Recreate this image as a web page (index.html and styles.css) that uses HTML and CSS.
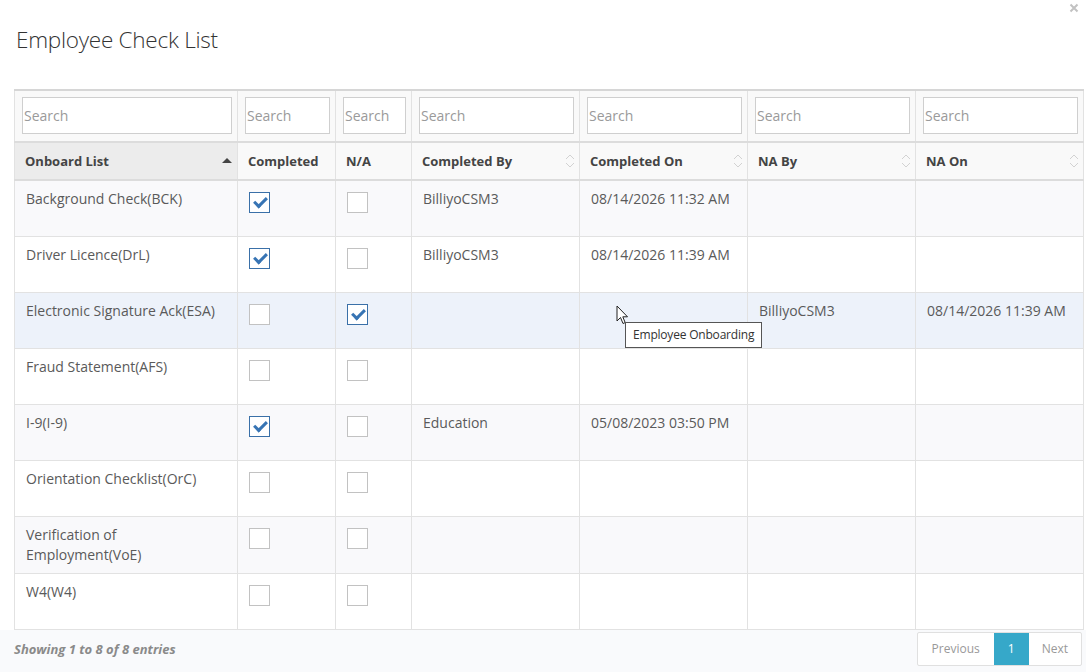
FILE: index.html
```html
<!DOCTYPE html>
<html lang="en">
<head>
    <meta charset="UTF-8">
    <title>Employee Check List</title>
    <link rel="stylesheet" href="styles.css">
</head>
<body>
    <div class="modal">
        <svg class="close" width="10" height="10" viewBox="0 0 10 10">
            <path d="M1.5 1.5 L8.5 8.5 M8.5 1.5 L1.5 8.5" stroke="#c2c2c2" stroke-width="2"/>
        </svg>
        <h1>Employee Check List</h1>

        <div class="table-wrap">
            <table class="grid">
                <colgroup>
                    <col style="width:223px">
                    <col style="width:98px">
                    <col style="width:76px">
                    <col style="width:168px">
                    <col style="width:168px">
                    <col style="width:168px">
                    <col style="width:168px">
                </colgroup>
                <thead>
                    <tr class="filters">
                        <th><input type="text" placeholder="Search"></th>
                        <th><input type="text" placeholder="Search"></th>
                        <th><input type="text" placeholder="Search"></th>
                        <th><input type="text" placeholder="Search"></th>
                        <th><input type="text" placeholder="Search"></th>
                        <th><input type="text" placeholder="Search"></th>
                        <th><input type="text" placeholder="Search"></th>
                    </tr>
                    <tr class="heads">
                        <th class="sorted">Onboard List <span class="sort-up"></span></th>
                        <th>Completed</th>
                        <th>N/A</th>
                        <th class="sortable">Completed By <svg class="sort" width="10" height="16" viewBox="0 0 10 16"><path d="M1 6 L5 2 L9 6 M1 10 L5 14 L9 10" fill="none" stroke="#d2d2d2" stroke-width="1"/></svg></th>
                        <th class="sortable">Completed On <svg class="sort" width="10" height="16" viewBox="0 0 10 16"><path d="M1 6 L5 2 L9 6 M1 10 L5 14 L9 10" fill="none" stroke="#d2d2d2" stroke-width="1"/></svg></th>
                        <th class="sortable">NA By <svg class="sort" width="10" height="16" viewBox="0 0 10 16"><path d="M1 6 L5 2 L9 6 M1 10 L5 14 L9 10" fill="none" stroke="#d2d2d2" stroke-width="1"/></svg></th>
                        <th class="sortable">NA On <svg class="sort" width="10" height="16" viewBox="0 0 10 16"><path d="M1 6 L5 2 L9 6 M1 10 L5 14 L9 10" fill="none" stroke="#d2d2d2" stroke-width="1"/></svg></th>
                    </tr>
                </thead>
                <tbody>
                    <tr class="odd">
                        <td>Background Check(BCK)</td>
                        <td><span class="cb checked"></span></td>
                        <td><span class="cb"></span></td>
                        <td>BilliyoCSM3</td>
                        <td>08/14/2026 11:32 AM</td>
                        <td></td>
                        <td></td>
                    </tr>
                    <tr>
                        <td>Driver Licence(DrL)</td>
                        <td><span class="cb checked"></span></td>
                        <td><span class="cb"></span></td>
                        <td>BilliyoCSM3</td>
                        <td>08/14/2026 11:39 AM</td>
                        <td></td>
                        <td></td>
                    </tr>
                    <tr class="hover">
                        <td>Electronic Signature Ack(ESA)</td>
                        <td><span class="cb"></span></td>
                        <td><span class="cb checked"></span></td>
                        <td></td>
                        <td></td>
                        <td>BilliyoCSM3</td>
                        <td>08/14/2026 11:39 AM</td>
                    </tr>
                    <tr>
                        <td>Fraud Statement(AFS)</td>
                        <td><span class="cb"></span></td>
                        <td><span class="cb"></span></td>
                        <td></td>
                        <td></td>
                        <td></td>
                        <td></td>
                    </tr>
                    <tr class="odd">
                        <td>I-9(I-9)</td>
                        <td><span class="cb checked"></span></td>
                        <td><span class="cb"></span></td>
                        <td>Education</td>
                        <td>05/08/2023 03:50 PM</td>
                        <td></td>
                        <td></td>
                    </tr>
                    <tr>
                        <td>Orientation Checklist(OrC)</td>
                        <td><span class="cb"></span></td>
                        <td><span class="cb"></span></td>
                        <td></td>
                        <td></td>
                        <td></td>
                        <td></td>
                    </tr>
                    <tr class="odd">
                        <td>Verification of Employment(VoE)</td>
                        <td><span class="cb"></span></td>
                        <td><span class="cb"></span></td>
                        <td></td>
                        <td></td>
                        <td></td>
                        <td></td>
                    </tr>
                    <tr>
                        <td>W4(W4)</td>
                        <td><span class="cb"></span></td>
                        <td><span class="cb"></span></td>
                        <td></td>
                        <td></td>
                        <td></td>
                        <td></td>
                    </tr>
                </tbody>
            </table>

            <svg class="cursor" width="13" height="20" viewBox="0 0 13 20">
                <path d="M1 1 L1 16 L4.5 12.5 L7 18.5 L9.2 17.6 L6.8 11.8 L11.5 11.8 Z" fill="#fff" stroke="#222" stroke-width="1" stroke-linejoin="round"/>
            </svg>
            <div class="tooltip">Employee Onboarding</div>
        </div>

        <div class="footer">
            <div class="info">Showing 1 to 8 of 8 entries</div>
            <div class="pager">
                <span class="page">Previous</span>
                <span class="page active">1</span>
                <span class="page next">Next</span>
            </div>
        </div>
    </div>
</body>
</html>
```

FILE: styles.css
```css
* {
    box-sizing: border-box;
}

body {
    margin: 0;
    font-family: "Open Sans", "Liberation Sans", sans-serif;
    background-color: #fff;
    color: #555;
}

.modal {
    position: relative;
    width: 1086px;
}

.close {
    position: absolute;
    top: 3px;
    right: 7px;
}

h1 {
    margin: 0;
    padding: 24px 0 0 16px;
    height: 89px;
    font-size: 22.5px;
    font-weight: 300;
    color: #333;
    letter-spacing: -0.25px;
}

.table-wrap {
    position: relative;
    margin-left: 14px;
    width: 1070px;
}

.grid {
    border-collapse: collapse;
    table-layout: fixed;
    width: 1070px;
    border: 1px solid #d6d6d6;
    border-top: 2px solid #d6d6d6;
    font-size: 14px;
}

.grid th,
.grid td {
    border-left: 1px solid #e2e2e2;
    border-right: 1px solid #e2e2e2;
    text-align: left;
    vertical-align: top;
}

.filters th {
    padding: 6px 5px 7px 7px;
    background-color: #f9f9f9;
    border-bottom: 2px solid #dcdcdc;
}

.filters input {
    display: block;
    width: 100%;
    height: 37px;
    border: 1px solid #cfcfcf;
    padding: 0 1px;
    font-family: "Open Sans", "Liberation Sans", sans-serif;
    font-size: 14px;
    color: #555;
    background: #fff;
}

.filters input::placeholder {
    color: #9a9a9a;
}

.heads th {
    position: relative;
    height: 38px;
    padding: 9px 10px 0 10px;
    font-size: 13px;
    font-weight: 700;
    color: #444;
    background-color: #f9f9f9;
    border-bottom: 2px solid #dcdcdc;
}

.heads th.sorted {
    background-color: #ececec;
}

.sort-up {
    position: absolute;
    right: 5px;
    top: 15px;
    width: 0;
    height: 0;
    border-left: 5px solid transparent;
    border-right: 5px solid transparent;
    border-bottom: 5px solid #444;
}

.sort {
    position: absolute;
    right: 4px;
    top: 10px;
}

.grid tbody tr {
    height: 56px;
}

.grid tbody td {
    padding: 8px 11px;
    line-height: 20px;
    color: #5a5a5a;
    border-bottom: 1px solid #e2e2e2;
    background-color: #fff;
}

.grid tbody tr.odd td {
    background-color: #f9f9fb;
}

.grid tbody tr.hover td {
    background-color: #edf2fa;
}

.cb {
    display: block;
    width: 21px;
    height: 21px;
    margin-top: 3px;
    border: 1px solid #c2c2c2;
    background: #fff;
    position: relative;
}

.cb.checked {
    border-color: #3a70a8;
}

.cb.checked::after {
    content: "";
    position: absolute;
    left: 4px;
    top: 3px;
    width: 10px;
    height: 5px;
    border-left: 3px solid #3774b4;
    border-bottom: 3px solid #3774b4;
    transform: rotate(-45deg);
    transform-origin: center;
    margin-top: 1px;
}

.tooltip {
    position: absolute;
    left: 611px;
    top: 233px;
    padding: 4px 7px 4px 7px;
    font-size: 12px;
    line-height: 16px;
    color: #333;
    background: #fff;
    border: 1px solid #555;
    white-space: nowrap;
    letter-spacing: -0.2px;
}

.cursor {
    position: absolute;
    left: 602px;
    top: 216px;
}

.footer {
    display: flex;
    justify-content: space-between;
    align-items: flex-start;
    background-color: #f9fafc;
    height: 44px;
    padding: 3px 4px 0 14px;
}

.info {
    padding-top: 7px;
    font-size: 13px;
    font-weight: 700;
    font-style: italic;
    color: #8a8a8a;
}

.pager {
    display: flex;
    border: 1px solid #e0e0e0;
    border-radius: 2px;
    background: #fff;
    height: 34px;
    margin-top: -1px;
}

.page {
    display: flex;
    align-items: center;
    padding: 0 14px;
    font-size: 12px;
    color: #999;
}

.page.next {
    padding: 0 13px;
}

.page.active {
    background-color: #36a8c9;
    color: #fff;
    padding: 0 14px;
}
```
